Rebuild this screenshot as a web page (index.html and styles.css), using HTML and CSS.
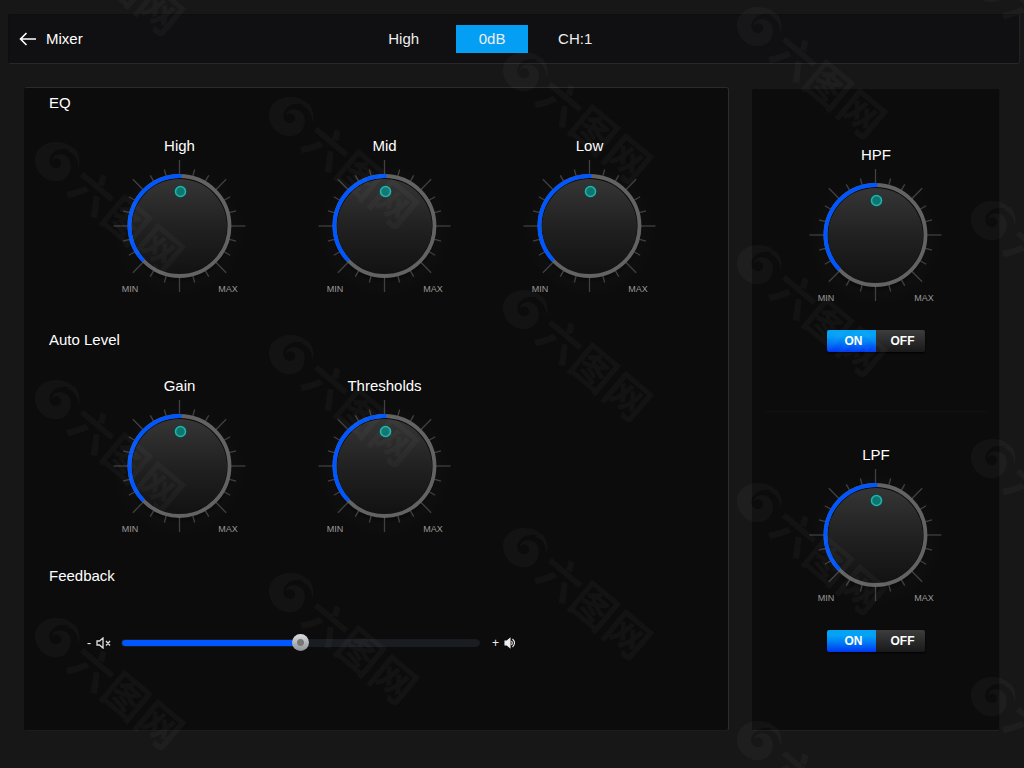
FILE: index.html
```
<!DOCTYPE html>
<html lang="en">
<head>
<meta charset="utf-8">
<meta name="viewport" content="width=device-width, initial-scale=1">
<title>Mixer</title>
<link rel="stylesheet" href="styles.css">
</head>
<body>
<svg class="defs" width="0" height="0" aria-hidden="true">
  <defs>
    <linearGradient id="face" x1="0" y1="0" x2="0" y2="1">
      <stop offset="0" stop-color="#353535"/><stop offset="0.5" stop-color="#212121"/><stop offset="1" stop-color="#121212"/>
    </linearGradient>
    <radialGradient id="shade">
      <stop offset="0.65" stop-color="#000" stop-opacity="0.7"/><stop offset="0.8" stop-color="#101010" stop-opacity="0.6"/><stop offset="1" stop-color="#111" stop-opacity="0"/>
    </radialGradient>
    <g id="ticks" stroke="#404040" stroke-width="1.3">
      <path d="M0-66V-51"/>
      <path d="M0-58.5V-51" transform="rotate(15)"/>
      <path d="M0-58.5V-51" transform="rotate(30)"/>
    </g>
    <symbol id="knob" viewBox="0 0 134 140">
      <g transform="translate(66.5 67)">
        <circle cy="5" r="66" fill="url(#shade)"/>
        <use href="#ticks"/><use href="#ticks" transform="rotate(45)"/><use href="#ticks" transform="rotate(90)"/><use href="#ticks" transform="rotate(135)"/>
        <use href="#ticks" transform="rotate(180)"/><use href="#ticks" transform="rotate(225)"/><use href="#ticks" transform="rotate(270)"/><use href="#ticks" transform="rotate(315)"/>
        <circle r="51" fill="#0a0a0a"/>
        <circle cy="0.5" r="47.5" fill="url(#face)"/>
        <circle r="50" fill="none" stroke="#636363" stroke-width="3.8"/>
        <path d="M-36 34.700A50 50 0 0 1 2-50" fill="none" stroke="#0057ff" stroke-width="4"/>
        <circle cx="1" cy="-34.5" r="6.5" fill="#0d4442"/>
        <circle cx="1" cy="-34.5" r="5" fill="#0c7672" stroke="#2bb0a8" stroke-width="1.5"/>
      </g>
    </symbol>
    <g id="mark">
      <path d="M-22-3C-22-14-12-21-1-21C8-21 14-18 18-12C10-15 2-15-3-11C-10-6-9 4-2 5C3 6 6 1 3-3C0-6-4-5-5-2C-5-8 3-11 9-7C17-2 14 12 7 16C-6 23-22 12-22-3Z"/>
      <path d="M10-13C19-9 22-2 21 5C24-2 22-10 17-15Z"/>
      <text transform="rotate(40)" x="24" y="16">六图网</text>
    </g>
  </defs>
</svg>

<header class="topbar">
  <div class="title">
    <a class="back" href="#" aria-label="Back">
      <svg width="18" height="16" viewBox="0 0 18 16" fill="none" stroke="#fff" stroke-width="1.6"><path d="M17 8H2M7.500 2L1.500 8L7.500 14"/></svg>
    </a>
    <h1>Mixer</h1>
  </div>
  <div class="status">
    <span>High</span>
    <button class="level" type="button">0dB</button>
    <span>CH:1</span>
  </div>
</header>

<main class="mixer">
  <div class="panel panel-main">
    <section class="group eq">
      <h2>EQ</h2>
      <div class="knobs">
        <div class="knob"><label for="high">High</label><div class="dial"><svg viewBox="0 0 134 140" aria-hidden="true"><use href="#knob"/><text x="17" y="133">MIN</text><text x="115" y="133">MAX</text></svg><input id="high" type="range"></div></div>
        <div class="knob"><label for="mid">Mid</label><div class="dial"><svg viewBox="0 0 134 140" aria-hidden="true"><use href="#knob"/><text x="17" y="133">MIN</text><text x="115" y="133">MAX</text></svg><input id="mid" type="range"></div></div>
        <div class="knob"><label for="low">Low</label><div class="dial"><svg viewBox="0 0 134 140" aria-hidden="true"><use href="#knob"/><text x="17" y="133">MIN</text><text x="115" y="133">MAX</text></svg><input id="low" type="range"></div></div>
      </div>
    </section>
    <section class="group auto">
      <h2>Auto Level</h2>
      <div class="knobs">
        <div class="knob"><label for="gain">Gain</label><div class="dial"><svg viewBox="0 0 134 140" aria-hidden="true"><use href="#knob"/><text x="17" y="133">MIN</text><text x="115" y="133">MAX</text></svg><input id="gain" type="range"></div></div>
        <div class="knob"><label for="thresholds">Thresholds</label><div class="dial"><svg viewBox="0 0 134 140" aria-hidden="true"><use href="#knob"/><text x="17" y="133">MIN</text><text x="115" y="133">MAX</text></svg><input id="thresholds" type="range"></div></div>
      </div>
    </section>
    <section class="group feedback">
      <h2><label for="feedback">Feedback</label></h2>
      <div class="volume">
        <span class="end"><span>-</span>
          <svg width="16" height="12" viewBox="0 0 16 12" fill="none" stroke="#ddd" stroke-width="1.3" aria-hidden="true"><path d="M1 4H3.500L7 1V11L3.500 8H1ZM10 4L14 8.500M14 4L10 8.500"/></svg>
        </span>
        <input id="feedback" class="slider" type="range" min="0" max="100" value="50">
        <span class="end plus"><span>+</span>
          <svg width="12" height="12" viewBox="0 0 12 12" fill="none" stroke="#eee" stroke-width="1.1" aria-hidden="true"><path d="M1 4H3L6 1.500V10.500L3 8H1Z" fill="#eee"/><path d="M7.500 4Q9 6 7.500 8M8.500 2Q12.500 6 8.500 10"/></svg>
        </span>
      </div>
    </section>
  </div>

  <div class="panel panel-side">
    <section class="filter">
      <div class="knob"><label for="hpf">HPF</label><div class="dial"><svg viewBox="0 0 134 140" aria-hidden="true"><use href="#knob"/><text x="17" y="133">MIN</text><text x="115" y="133">MAX</text></svg><input id="hpf" type="range"></div></div>
      <div class="switch" role="group" aria-label="HPF power"><button class="on" type="button" aria-pressed="true">ON</button><button type="button" aria-pressed="false">OFF</button></div>
    </section>
    <hr>
    <section class="filter">
      <div class="knob"><label for="lpf">LPF</label><div class="dial"><svg viewBox="0 0 134 140" aria-hidden="true"><use href="#knob"/><text x="17" y="133">MIN</text><text x="115" y="133">MAX</text></svg><input id="lpf" type="range"></div></div>
      <div class="switch" role="group" aria-label="LPF power"><button class="on" type="button" aria-pressed="true">ON</button><button type="button" aria-pressed="false">OFF</button></div>
    </section>
  </div>
</main>

<svg class="watermark" aria-hidden="true">
  <use href="#mark" x="57" y="-75"/><use href="#mark" x="57" y="163"/><use href="#mark" x="57" y="401"/><use href="#mark" x="57" y="639"/>
  <use href="#mark" x="291" y="118"/><use href="#mark" x="291" y="356"/><use href="#mark" x="291" y="594"/>
  <use href="#mark" x="525" y="73"/><use href="#mark" x="525" y="311"/><use href="#mark" x="525" y="549"/>
  <use href="#mark" x="759" y="28"/><use href="#mark" x="759" y="266"/><use href="#mark" x="759" y="504"/><use href="#mark" x="759" y="742"/>
  <use href="#mark" x="993" y="-16"/><use href="#mark" x="993" y="222"/><use href="#mark" x="993" y="460"/><use href="#mark" x="993" y="698"/>
</svg>
</body>
</html>
```
FILE: styles.css
```
* { box-sizing: border-box; }

body {
  position: relative;
  margin: 0;
  min-height: 100vh;
  padding: 14px 4px 37px 8px;
  overflow-x: hidden;
  background: #171717;
  color: #fff;
  font: 15px/20px "Liberation Sans", Arial, "Noto Sans CJK SC", sans-serif;
}

h1, h2 { margin: 0; font-size: 15px; font-weight: 400; line-height: 20px; }
button { padding: 0; border: 0; color: inherit; font: inherit; cursor: pointer; }
.defs { position: absolute; }

.topbar {
  display: grid;
  grid-template-columns: 380fr 632fr;
  align-items: center;
  min-height: 50px;
  background: #101012;
  border: 1px solid #0e0e0e;
  border-right-color: #222;
  border-bottom-color: #282828;
  border-radius: 3px;
}
.title { display: flex; align-items: center; gap: 9px; padding-left: 10px; }
.back { display: flex; }
.status { display: flex; align-items: center; color: #eee; }
.level {
  width: 72px;
  height: 28px;
  margin: 0 30px 0 37px;
  background: #049ef4;
}

.mixer {
  display: grid;
  grid-template-columns: 705fr 248fr;
  gap: 23px;
  padding: 23px 20px 0 16px;
}
.panel { background: #0c0c0c; border: 1px solid #1c1c1c; border-radius: 3px; }
.panel-main {
  display: flex;
  flex-direction: column;
  gap: 27px;
  padding: 5px 0 77px;
  border-color: #2b2b2b #2d2d2d #1c1c1c #0c0c0c;
}
.panel-side {
  display: flex;
  flex-direction: column;
  margin-top: 2px;
  padding-top: 55px;
  border-color: #0c0c0c #141414 #202020 #0c0c0c;
}
.panel-side hr {
  width: 90%;
  height: 1px;
  margin: 59px auto 33px;
  border: 0;
  background: #121212;
}

.group { display: flex; flex-direction: column; gap: 23px; }
.group h2 { padding-left: 24px; }
.eq { padding-bottom: 4px; }
.auto { gap: 26px; }
.feedback { gap: 47px; }
.knobs {
  display: grid;
  grid-template-columns: repeat(3, 1fr);
  padding: 0 36px 0 52px;
}
.knob { display: flex; flex-direction: column; align-items: center; gap: 3px; }
.dial { position: relative; width: 134px; height: 140px; }
.dial svg { display: block; width: 100%; height: 100%; }
.dial text { fill: #999; font-size: 9px; text-anchor: middle; }
.dial input { position: absolute; inset: 0; width: 100%; height: 100%; margin: 0; opacity: 0; }

.volume { display: flex; align-items: center; gap: 9px; padding-left: 62px; }
.end { display: flex; align-items: center; gap: 5px; color: #eee; font-size: 12px; }
.plus { padding-left: 3px; }
.slider {
  width: 56%;
  height: 20px;
  margin: 0;
  appearance: none;
  background: transparent;
}
.slider::-webkit-slider-runnable-track {
  height: 8px;
  border: 1px solid #171c22;
  border-radius: 4px;
  background: linear-gradient(90deg, #0057ff 50%, #191c20 50%);
}
.slider::-webkit-slider-thumb {
  width: 17px;
  height: 17px;
  margin-top: -6px;
  appearance: none;
  border-radius: 50%;
  background: radial-gradient(circle, #777 3px, transparent 4px), linear-gradient(#dadde0, #8d9094);
}

.filter { display: flex; flex-direction: column; align-items: center; gap: 22px; }
.switch {
  display: grid;
  grid-template-columns: 1fr 1fr;
  width: 98px;
  height: 22px;
  overflow: hidden;
  border-radius: 2px;
  box-shadow: 0 1px 2px #000;
  font-size: 12px;
  font-weight: 700;
}
.switch button { padding-left: 4px; background: linear-gradient(#3d3d3d, #191919); }
.switch .on { background: linear-gradient(#04a2f5 25%, #0084f5 50%, #0036f0); }

.watermark {
  position: absolute;
  inset: 0;
  width: 100%;
  height: 100%;
  overflow: hidden;
  pointer-events: none;
  fill: #fff;
  opacity: 0.028;
}
#mark text { font: 700 44px "Noto Sans CJK SC", sans-serif; }
```
